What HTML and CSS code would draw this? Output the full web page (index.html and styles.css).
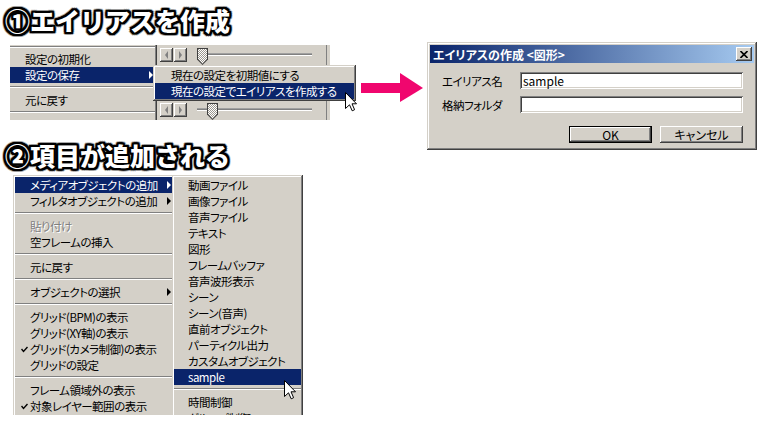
FILE: index.html
```html
<!DOCTYPE html>
<html lang="ja">
<head>
    <meta charset="UTF-8">
    <title>エイリアスの作成</title>
    <link rel="stylesheet" href="styles.css">
</head>
<body>
<div class="page">
    <div class="left">
        <h1 class="step">①エイリアスを作成</h1>

        <div class="shot shot1">
            <div class="clip">
                <div class="menu1">
                    <div class="sep first"></div>
                    <div class="item">設定の初期化</div>
                    <div class="item active sub">設定の保存</div>
                    <div class="sep"></div>
                    <div class="item">元に戻す</div>
                    <div class="sep"></div>
                    <div class="item">画面の更新</div>
                </div>
                <div class="win">
                    <div class="slider-row">
                        <span class="sbtn prev"></span>
                        <span class="sbtn next"></span>
                        <div class="slider">
                            <div class="track"></div>
                            <span class="thumb" style="left:0px"></span>
                        </div>
                    </div>
                    <div class="slider-row">
                        <span class="sbtn prev"></span>
                        <span class="sbtn next"></span>
                        <div class="slider">
                            <div class="track"></div>
                            <span class="thumb" style="left:10px"></span>
                        </div>
                    </div>
                </div>
            </div>
            <div class="popup submenu1">
                <div class="item">現在の設定を初期値にする</div>
                <div class="item active">現在の設定でエイリアスを作成する</div>
            </div>
            <svg class="cursor cursor1" width="12" height="20" viewBox="0 0 12 20">
                <path d="M0.5 0.5 L0.5 16.5 L4.5 12.8 L7.2 18.8 L9.6 17.7 L7 11.8 L11.5 11.8 Z" fill="#fff" stroke="#000" stroke-width="1"/>
            </svg>
        </div>

        <h1 class="step second">②項目が追加される</h1>

        <div class="shot shot2">
            <div class="popup menu2">
                <div class="item active sub">メディアオブジェクトの追加</div>
                <div class="item sub">フィルタオブジェクトの追加</div>
                <div class="sep"></div>
                <div class="item disabled">貼り付け</div>
                <div class="item">空フレームの挿入</div>
                <div class="sep"></div>
                <div class="item">元に戻す</div>
                <div class="sep"></div>
                <div class="item sub">オブジェクトの選択</div>
                <div class="sep"></div>
                <div class="item">グリッド(BPM)の表示</div>
                <div class="item">グリッド(XY軸)の表示</div>
                <div class="item"><span class="check"><svg width="7" height="7" viewBox="0 0 7 7"><path d="M0.5 3 L2.5 5.5 L6.5 1" fill="none" stroke="#000" stroke-width="1.4"/></svg></span>グリッド(カメラ制御)の表示</div>
                <div class="item">グリッドの設定</div>
                <div class="sep"></div>
                <div class="item">フレーム領域外の表示</div>
                <div class="item"><span class="check"><svg width="7" height="7" viewBox="0 0 7 7"><path d="M0.5 3 L2.5 5.5 L6.5 1" fill="none" stroke="#000" stroke-width="1.4"/></svg></span>対象レイヤー範囲の表示</div>
            </div>
            <div class="popup submenu2">
                <div class="item">動画ファイル</div>
                <div class="item">画像ファイル</div>
                <div class="item">音声ファイル</div>
                <div class="item">テキスト</div>
                <div class="item">図形</div>
                <div class="item">フレームバッファ</div>
                <div class="item">音声波形表示</div>
                <div class="item">シーン</div>
                <div class="item">シーン(音声)</div>
                <div class="item">直前オブジェクト</div>
                <div class="item">パーティクル出力</div>
                <div class="item">カスタムオブジェクト</div>
                <div class="item active">sample</div>
                <div class="sep"></div>
                <div class="item">時間制御</div>
                <div class="item">グループ制御</div>
            </div>
            <svg class="cursor cursor2" width="12" height="20" viewBox="0 0 12 20">
                <path d="M0.5 0.5 L0.5 16.5 L4.5 12.8 L7.2 18.8 L9.6 17.7 L7 11.8 L11.5 11.8 Z" fill="#fff" stroke="#000" stroke-width="1"/>
            </svg>
        </div>
    </div>

    <div class="right">
        <svg class="arrow" width="62" height="30" viewBox="0 0 62 30">
            <rect x="0" y="10" width="40" height="10" fill="#f0066e"/>
            <polygon points="39,0 62,15 39,29" fill="#f0066e"/>
        </svg>

        <div class="dialog">
            <div class="titlebar">
                <span>エイリアスの作成 &lt;図形&gt;</span>
                <span class="close">
                    <svg width="8" height="7" viewBox="0 0 8 7"><path d="M0.5 0 L7.5 7 M7.5 0 L0.5 7" stroke="#000" stroke-width="1.6"/></svg>
                </span>
            </div>
            <div class="dlg-body">
                <div class="field">
                    <label>エイリアス名</label>
                    <div class="input">sample</div>
                </div>
                <div class="field">
                    <label>格納フォルダ</label>
                    <div class="input"></div>
                </div>
                <div class="buttons">
                    <button class="btn default">OK</button>
                    <button class="btn">キャンセル</button>
                </div>
            </div>
        </div>
    </div>
</div>
</body>
</html>
```

FILE: styles.css
```css
* {
    box-sizing: border-box;
}
body {
    margin: 0;
    background: #fff;
    color: #000;
    font-family: "Noto Sans CJK JP", sans-serif;
}
.page {
    display: flex;
    width: 768px;
    height: 424px;
    overflow: hidden;
}
.left {
    width: 355px;
    flex: none;
}

/* outlined step titles */
.step {
    margin: 5px 0 0 5px;
    font-size: 25px;
    line-height: 30px;
    font-weight: 900;
    color: #fff;
    white-space: nowrap;
    text-shadow:
        2px 0 #000, -2px 0 #000, 0 2px #000, 0 -2px #000,
        2px 2px #000, -2px -2px #000, 2px -2px #000, -2px 2px #000,
        1px 2px #000, 2px 1px #000, -1px 2px #000, -2px 1px #000,
        1px -2px #000, 2px -1px #000, -1px -2px #000, -2px -1px #000,
        3px 0 #9a9a9a, -3px 0 #9a9a9a, 0 3px #9a9a9a, 0 -3px #9a9a9a,
        3px 2px #b0b0b0, -3px 2px #b0b0b0, 3px -2px #b0b0b0, -3px -2px #b0b0b0,
        2px 3px #b0b0b0, -2px 3px #b0b0b0, 2px -3px #b0b0b0, -2px -3px #b0b0b0;
}
.step.second {
    margin-top: 20px;
}

/* menu basics */
.item {
    display: flex;
    align-items: center;
    height: 16px;
    line-height: 16px;
    padding-left: 15px;
    font-size: 11.5px;
    letter-spacing: -0.5px;
    font-feature-settings: "palt";
    white-space: nowrap;
}
.item.active {
    background: #0a246a;
    color: #fff;
}
.item.disabled {
    color: #808080;
    text-shadow: 1px 1px #fff;
}
.item.sub::after {
    content: "";
    margin-left: auto;
    margin-right: 2px;
    border-left: 4px solid currentColor;
    border-top: 4px solid transparent;
    border-bottom: 4px solid transparent;
}
.check {
    display: flex;
    width: 12px;
    margin-left: -12px;
    padding-left: 3px;
}
.sep {
    height: 9px;
    padding-top: 3px;
}
.sep::before {
    content: "";
    display: block;
    border-top: 1px solid #808080;
    border-bottom: 1px solid #fff;
}
.sep.first {
    height: 6px;
    padding-top: 1px;
}
.popup {
    background: #d4d0c8;
    padding: 2px;
    box-shadow: inset -1px -1px #404040, inset 1px 1px #d4d0c8,
                inset -2px -2px #808080, inset 2px 2px #fff;
}

.shot {
    position: relative;
}

/* shot 1 */
.shot1 {
    margin: 10px 0 0 10px;
    width: 320px;
    height: 75px;
}
.clip {
    display: flex;
    width: 320px;
    height: 75px;
    overflow: hidden;
    background: #d4d0c8;
}
.menu1 {
    width: 147px;
    flex: none;
    padding-right: 2px;
    box-shadow: inset -1px 0 #404040, inset -2px 0 #808080;
}
.menu1 .item {
    padding-left: 15px;
}
.win {
    flex: 1;
    display: flex;
    flex-direction: column;
    gap: 40px;
    padding: 3px 0 0 3px;
    margin-right: 3px;
    border-right: 1px solid #808080;
}
.slider-row {
    display: flex;
    height: 15px;
}
.sbtn {
    width: 13px;
    height: 14px;
    margin-right: 1px;
    display: flex;
    align-items: center;
    justify-content: center;
    background: #d4d0c8;
    box-shadow: inset -1px -1px #404040, inset 1px 1px #fff,
                inset -2px -2px #808080;
}
.sbtn::before {
    content: "";
    border-top: 4px solid transparent;
    border-bottom: 4px solid transparent;
}
.sbtn.prev::before {
    border-right: 3px solid #808080;
}
.sbtn.next::before {
    border-left: 3px solid #808080;
}
.slider {
    position: relative;
    width: 115px;
    height: 17px;
    margin-left: 9px;
}
.track {
    margin-top: 6px;
    border-top: 1px solid #808080;
    border-bottom: 1px solid #fff;
    box-shadow: 0 -1px #a0a0a0;
}
.thumb {
    position: absolute;
    top: 0;
    width: 11px;
    height: 17px;
    background: #404040;
    clip-path: polygon(0 0, 100% 0, 100% 68%, 50% 100%, 0 68%);
}
.thumb::before {
    content: "";
    position: absolute;
    inset: 1px;
    background: repeating-conic-gradient(#fff 0 25%, #9c9890 0 50%) 0 0 / 2px 2px;
    clip-path: polygon(0 0, 100% 0, 100% 66%, 50% 100%, 0 66%);
}
.submenu1 {
    position: absolute;
    left: 143px;
    top: 20px;
    width: 203px;
    z-index: 2;
}
.submenu1 .item {
    padding-left: 16px;
}
.cursor {
    position: absolute;
    z-index: 3;
}
.cursor1 {
    left: 335px;
    top: 47px;
}

/* shot 2 */
.shot2 {
    margin: 5px 0 0 13px;
    width: 292px;
    height: 240px;
    overflow: hidden;
}
.menu2 {
    width: 162px;
    height: 260px;
}
.submenu2 {
    position: absolute;
    left: 159px;
    top: 0;
    width: 131px;
    height: 260px;
    z-index: 2;
}
.submenu2 .item {
    padding-left: 14px;
}
.cursor2 {
    left: 271px;
    top: 205px;
}

/* right side: arrow and dialog */
.right {
    display: flex;
    align-items: flex-start;
}
.arrow {
    flex: none;
    margin: 73px 0 0 6px;
}
.dialog {
    flex: none;
    width: 330px;
    height: 108px;
    margin: 42px 0 0 4px;
    padding: 3px;
    background: #d4d0c8;
    font-size: 12px;
    font-feature-settings: "palt";
    box-shadow: inset -1px -1px #404040, inset 1px 1px #d4d0c8,
                inset -2px -2px #808080, inset 2px 2px #fff;
}
.titlebar {
    display: flex;
    align-items: center;
    justify-content: space-between;
    height: 18px;
    padding: 0 2px 0 3px;
    background: linear-gradient(90deg, #0a246a, #a6caf0);
    color: #fff;
    font-weight: 700;
    white-space: nowrap;
}
.close {
    display: flex;
    align-items: center;
    justify-content: center;
    width: 16px;
    height: 14px;
    background: #d4d0c8;
    box-shadow: inset -1px -1px #404040, inset 1px 1px #fff,
                inset -2px -2px #808080;
}
.dlg-body {
    padding: 9px 11px 0 12px;
}
.field {
    display: flex;
    align-items: center;
    height: 17px;
}
.field + .field {
    margin-top: 7px;
}
.field label {
    width: 78px;
    flex: none;
    font-size: 11.5px;
    letter-spacing: -0.5px;
}
.input {
    flex: 1;
    height: 17px;
    padding: 0 3px;
    line-height: 17px;
    background: #fff;
    box-shadow: inset 1px 1px #808080, inset -1px -1px #fff,
                inset 2px 2px #404040, inset -2px -2px #d4d0c8;
}
.buttons {
    display: flex;
    justify-content: flex-end;
    gap: 8px;
    margin-top: 13px;
}
.btn {
    width: 83px;
    height: 17px;
    padding: 0;
    border: 0;
    background: #d4d0c8;
    font: 12px/15px "Noto Sans CJK JP", sans-serif;
    font-feature-settings: "palt";
    color: #000;
    box-shadow: inset -1px -1px #404040, inset 1px 1px #fff,
                inset -2px -2px #808080;
}
.btn.default {
    border: 1px solid #000;
}
```
